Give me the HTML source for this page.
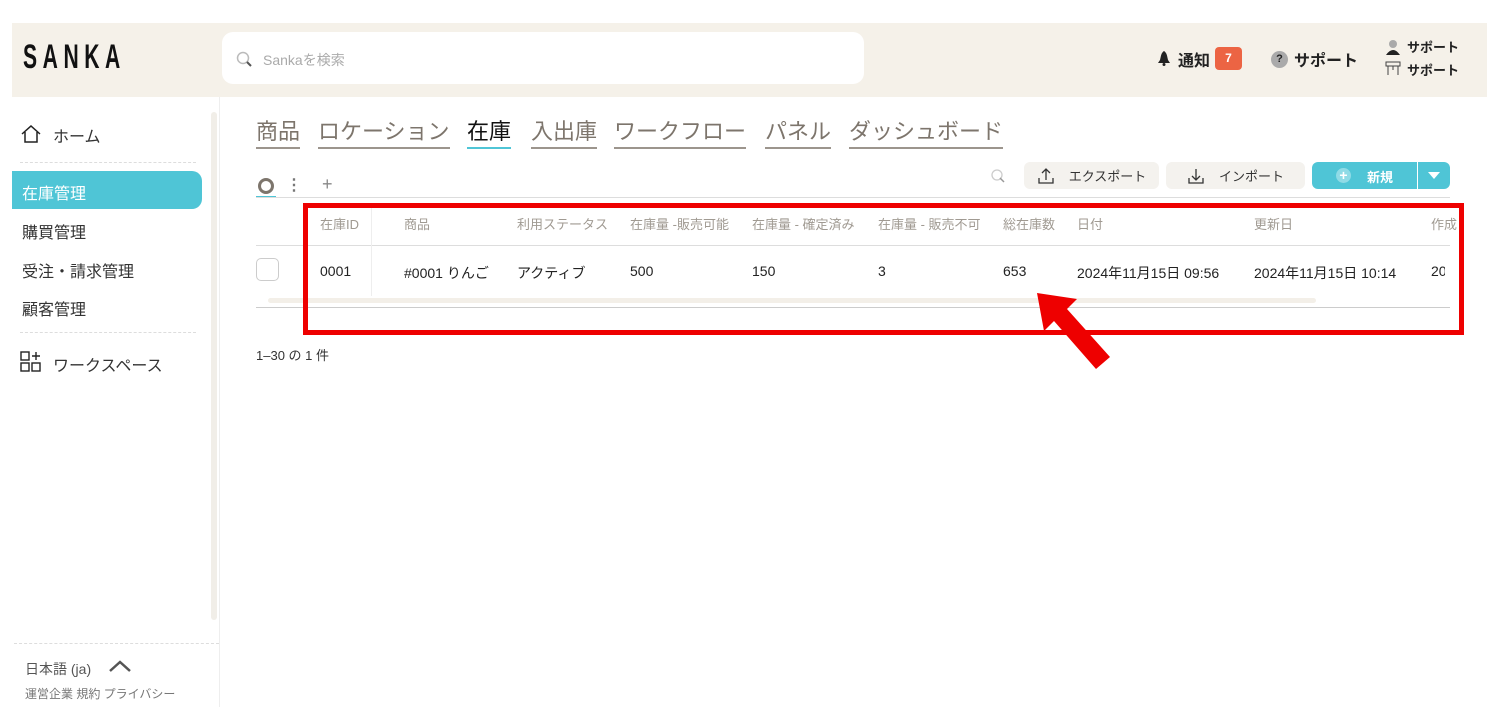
<!DOCTYPE html>
<html><head><meta charset="utf-8"><style>
*{margin:0;padding:0;box-sizing:border-box}
body{width:1500px;height:718px;background:#fff;font-family:"Liberation Sans","Noto Sans CJK JP",sans-serif;position:relative;overflow:hidden;color:#222}
.a{position:absolute;white-space:nowrap}
.hdr{left:12px;top:23px;width:1475px;height:74px;background:#f5f1e9}
.tab{font-size:22px;color:#7d756c;top:118px;border-bottom:2px solid #9c958d;padding-bottom:1px;line-height:28px}
.th{font-size:13px;color:#a09a92;top:214px}
.td{font-size:14px;color:#222;top:263px}
.btn{background:#f4f2ee;border-radius:6px;height:27px;top:162px;font-size:13px;color:#333;display:flex;align-items:center;justify-content:center;gap:14px}
.nav{font-size:16px;color:#333;left:22px}
</style></head><body>
<div class="a hdr"></div>
<div class="a" style="left:23px;top:38px;font-size:34px;font-weight:bold;letter-spacing:9px;color:#111;transform:scaleX(0.62);transform-origin:0 0">SANKA</div>
<div class="a" style="left:222px;top:32px;width:642px;height:52px;background:#fff;border-radius:11px"></div>
<svg class="a" style="left:236px;top:51px" width="17" height="17"><circle cx="7" cy="7" r="5.5" fill="none" stroke="#bbb" stroke-width="1.5"/><path d="M11 11l4 4" stroke="#555" stroke-width="2"/></svg>
<div class="a" style="left:263px;top:50px;font-size:14px;color:#aaa">Sankaを検索</div>
<svg class="a" style="left:1157px;top:50px" width="14" height="16"><path d="M7 1C4 3 4 6 3 10L1 13H13L11 10C10 6 10 3 7 1Z" fill="#222"/><circle cx="7" cy="14.5" r="1.5" fill="#222"/></svg>
<div class="a" style="left:1178px;top:47px;font-size:16px;font-weight:bold">通知</div>
<div class="a" style="left:1215px;top:47px;width:27px;height:23px;background:#ec6443;border-radius:4px;color:#fff;font-size:12px;font-weight:bold;text-align:center;line-height:23px">7</div>
<div class="a" style="left:1271px;top:51px;width:17px;height:17px;border-radius:50%;background:#aaa;color:#222;font-size:11px;font-weight:bold;text-align:center;line-height:17px">?</div>
<div class="a" style="left:1294px;top:47px;font-size:16px;font-weight:bold">サポート</div>
<svg class="a" style="left:1384px;top:39px" width="18" height="40"><circle cx="9" cy="5" r="4" fill="#aaa"/><path d="M2 16Q9 6 16 16Z" fill="#222"/><rect x="2" y="23" width="14" height="4" fill="none" stroke="#444"/><path d="M4 27V36M14 27V36M9 27V31" stroke="#444"/></svg>
<div class="a" style="left:1407px;top:37px;font-size:13px;font-weight:bold">サポート</div>
<div class="a" style="left:1407px;top:60px;font-size:13px;font-weight:bold">サポート</div>

<div class="a" style="left:211px;top:112px;width:6px;height:508px;background:#f1eee8;border-radius:3px"></div>
<div class="a" style="left:219px;top:97px;width:1px;height:610px;background:#eee"></div>
<svg class="a" style="left:20px;top:124px" width="22" height="20"><path d="M2 10L11 2L20 10M5 8V18H17V8" fill="none" stroke="#222" stroke-width="1.5"/></svg>
<div class="a nav" style="left:53px;top:123px">ホーム</div>
<div class="a" style="left:20px;top:162px;width:176px;border-top:1px dashed #ddd"></div>
<div class="a" style="left:12px;top:171px;width:190px;height:38px;background:#4fc5d6;border-radius:0 10px 10px 0"></div>
<div class="a nav" style="top:180px;color:#fff">在庫管理</div>
<div class="a nav" style="top:219px">購買管理</div>
<div class="a nav" style="top:258px">受注・請求管理</div>
<div class="a nav" style="top:296px">顧客管理</div>
<div class="a" style="left:20px;top:332px;width:176px;border-top:1px dashed #ddd"></div>
<svg class="a" style="left:20px;top:351px" width="22" height="22"><rect x="1" y="1" width="8" height="8" fill="none" stroke="#222" stroke-width="1.4"/><rect x="1" y="12" width="8" height="8" fill="none" stroke="#222" stroke-width="1.4"/><rect x="12" y="12" width="8" height="8" fill="none" stroke="#222" stroke-width="1.4"/><path d="M16 1V9M12 5H20" stroke="#222" stroke-width="1.4"/></svg>
<div class="a nav" style="left:53px;top:352px">ワークスペース</div>
<div class="a" style="left:14px;top:643px;width:205px;border-top:1px dashed #ddd"></div>
<div class="a" style="left:25px;top:659px;font-size:14px;color:#555">日本語 (ja)</div>
<svg class="a" style="left:108px;top:659px" width="24" height="14"><path d="M2 12L12 3L22 12" fill="none" stroke="#555" stroke-width="2.5"/></svg>
<div class="a" style="left:25px;top:685px;font-size:12px;color:#777">運営企業 規約 プライバシー</div>

<div class="a tab" style="left:256px">商品</div>
<div class="a tab" style="left:318px">ロケーション</div>
<div class="a tab" style="left:467px;color:#111;border-color:#4fc5d6">在庫</div>
<div class="a tab" style="left:531px">入出庫</div>
<div class="a tab" style="left:614px">ワークフロー</div>
<div class="a tab" style="left:765px">パネル</div>
<div class="a tab" style="left:849px">ダッシュボード</div>

<div class="a" style="left:258px;top:178px;width:16px;height:16px;border:3.5px solid #7d756c;border-radius:50%"></div>
<div class="a" style="left:256px;top:196px;width:20px;height:2px;background:#4fc5d6"></div>
<div class="a" style="left:286px;top:175px;font-size:16px;color:#777;font-weight:bold">⋮</div>
<div class="a" style="left:322px;top:174px;font-size:18px;color:#888">+</div>
<svg class="a" style="left:990px;top:168px" width="16" height="16"><circle cx="7" cy="7" r="5" fill="none" stroke="#ccc" stroke-width="1.3"/><path d="M10 10l4 4" stroke="#999" stroke-width="1.5"/></svg>
<div class="a btn" style="left:1024px;width:135px"><svg width="18" height="18"><path d="M9 2V13M5 6L9 2L13 6M2 11V16H16V11" fill="none" stroke="#333" stroke-width="1.3"/></svg>エクスポート</div>
<div class="a btn" style="left:1166px;width:139px"><svg width="18" height="18"><path d="M9 2V13M5 9L9 13L13 9M2 11V16H16V11" fill="none" stroke="#333" stroke-width="1.3"/></svg>インポート</div>
<div class="a" style="left:1312px;top:162px;width:138px;height:27px;background:#4fc5d6;border-radius:6px"></div>
<div class="a" style="left:1417px;top:162px;width:1px;height:27px;background:#fff"></div>
<div class="a" style="left:1336px;top:168px;width:15px;height:15px;border-radius:50%;background:#8fdbe6;color:#fff;font-size:14px;line-height:15px;text-align:center;font-weight:bold">+</div>
<div class="a" style="left:1367px;top:167px;font-size:13px;color:#fff;font-weight:bold">新規</div>
<svg class="a" style="left:1428px;top:172px" width="12" height="8"><path d="M0 0H12L6 7Z" fill="#fff"/></svg>
<div class="a" style="left:256px;top:197px;width:1194px;height:1px;background:#ddd"></div>

<div class="a" style="left:256px;top:245px;width:1194px;height:1px;background:#ddd"></div>
<div class="a" style="left:371px;top:206px;width:1px;height:90px;background:#eee"></div>
<div class="a th" style="left:320px">在庫ID</div>
<div class="a th" style="left:404px">商品</div>
<div class="a th" style="left:517px">利用ステータス</div>
<div class="a th" style="left:630px">在庫量 -販売可能</div>
<div class="a th" style="left:752px">在庫量 - 確定済み</div>
<div class="a th" style="left:878px">在庫量 - 販売不可</div>
<div class="a th" style="left:1003px">総在庫数</div>
<div class="a th" style="left:1077px">日付</div>
<div class="a th" style="left:1254px">更新日</div>
<div class="a th" style="left:1431px">作成</div>
<div class="a" style="left:256px;top:258px;width:23px;height:23px;border:1px solid #ccc;border-radius:5px"></div>
<div class="a td" style="left:320px">0001</div>
<div class="a td" style="left:404px">#0001 りんご</div>
<div class="a td" style="left:517px">アクティブ</div>
<div class="a td" style="left:630px">500</div>
<div class="a td" style="left:752px">150</div>
<div class="a td" style="left:878px">3</div>
<div class="a td" style="left:1003px">653</div>
<div class="a td" style="left:1077px">2024年11月15日 09:56</div>
<div class="a td" style="left:1254px">2024年11月15日 10:14</div>
<div class="a td" style="left:1431px;width:14px;overflow:hidden">2024</div>
<div class="a" style="left:268px;top:298px;width:1048px;height:5px;background:#f3efe8;border-radius:3px"></div>
<div class="a" style="left:256px;top:307px;width:1194px;height:1px;background:#ccc"></div>
<div class="a" style="left:303px;top:203px;width:1161px;height:132px;border:5px solid #ee0000"></div>
<div class="a" style="left:256px;top:345px;font-size:13px;color:#333">1–30 の 1 件</div>
<svg class="a" style="left:1030px;top:285px" width="90" height="95"><polygon points="7,8 47,14 37,24 80,72 66,84 24,36 14,46" fill="#ee0000"/></svg>
</body></html>
